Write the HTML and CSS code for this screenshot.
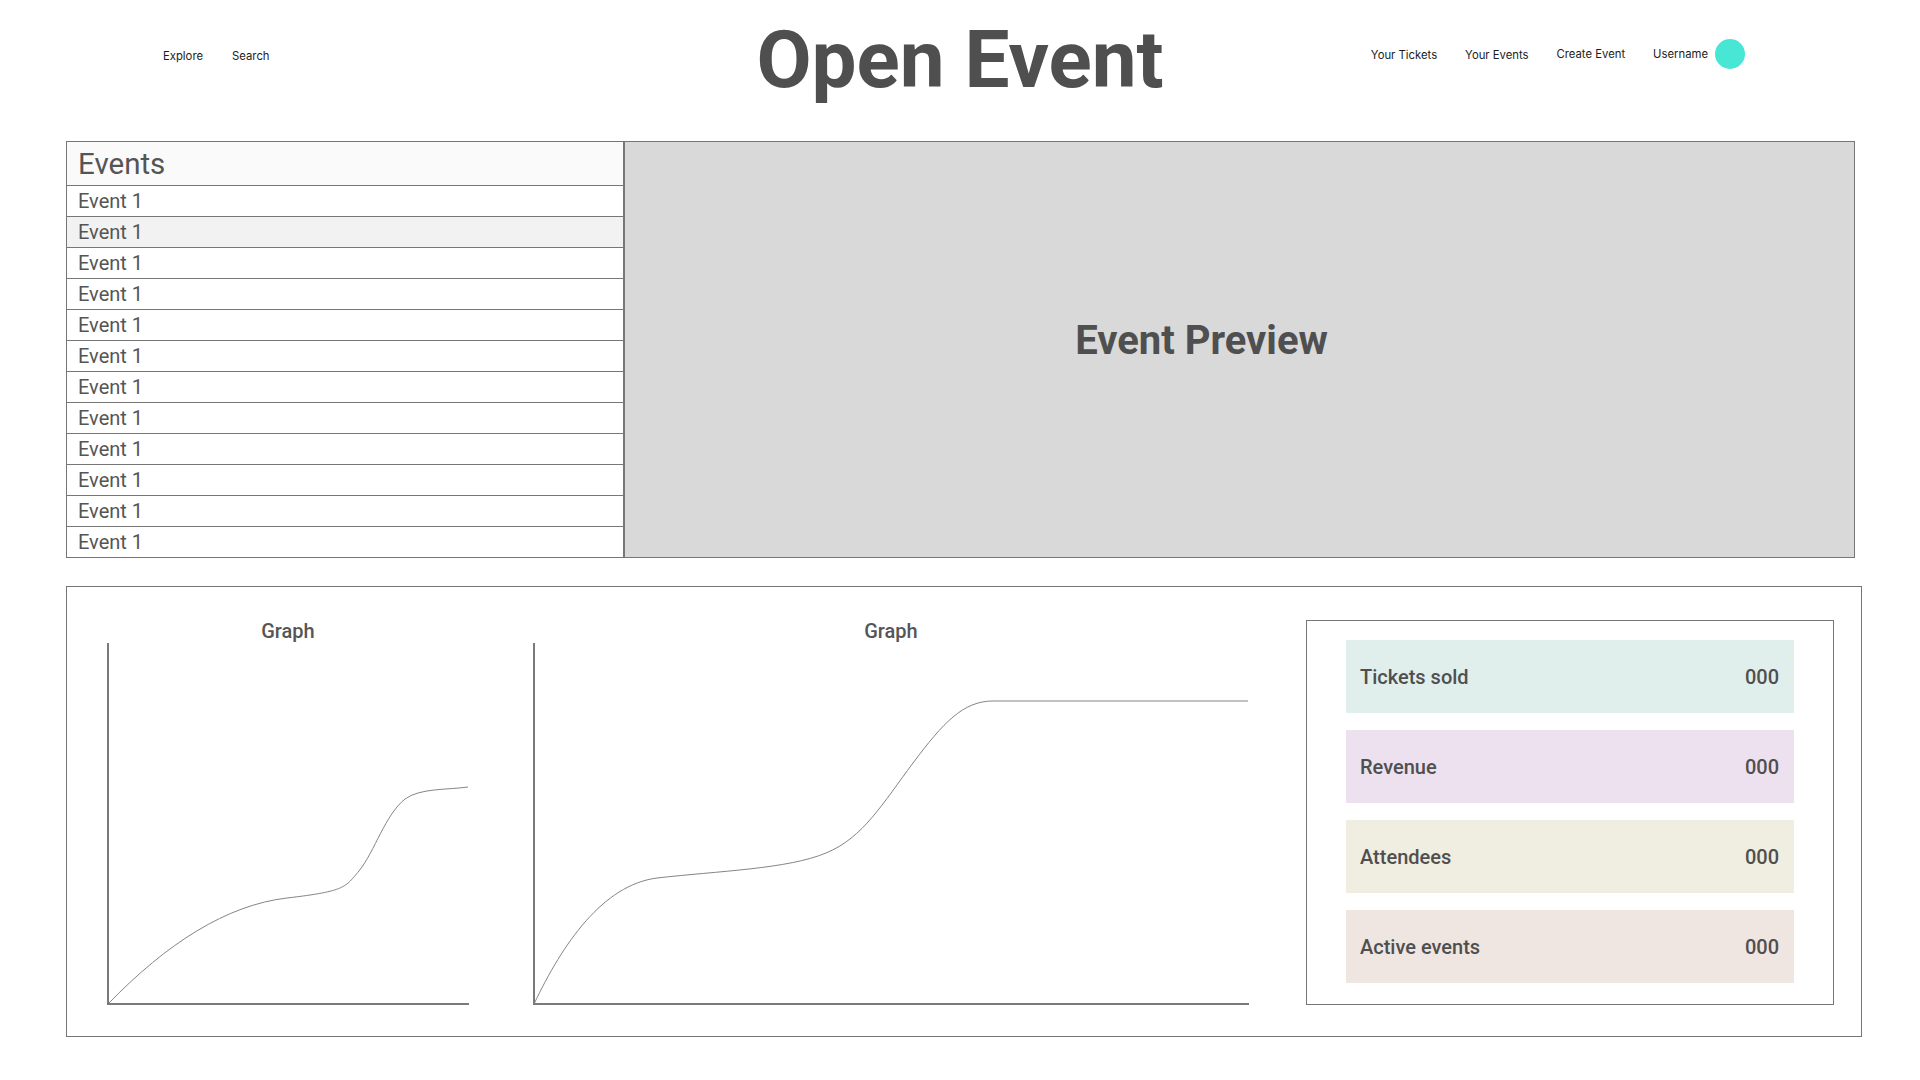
FILE: index.html
```html
<!DOCTYPE html>
<html lang="en">
<head>
<meta charset="utf-8">
<title>Open Event</title>
<link rel="stylesheet" href="styles.css">
</head>
<body>
<header class="topbar">
  <nav class="nav nav-left">
    <a class="nav-link" href="#">Explore</a>
    <a class="nav-link" href="#">Search</a>
  </nav>
  <h1 class="brand">Open Event</h1>
  <nav class="nav nav-right">
    <a class="nav-link" href="#">Your Tickets</a>
    <a class="nav-link" href="#">Your Events</a>
    <a class="nav-link nav-link-up" href="#">Create Event</a>
    <span class="user">
      <span class="nav-link nav-link-up">Username</span>
      <span class="avatar"></span>
    </span>
  </nav>
</header>

<main class="content">
  <section class="overview">
    <div class="event-list">
      <div class="list-head">Events</div>
      <div class="list-row">Event 1</div>
      <div class="list-row is-active">Event 1</div>
      <div class="list-row">Event 1</div>
      <div class="list-row">Event 1</div>
      <div class="list-row">Event 1</div>
      <div class="list-row">Event 1</div>
      <div class="list-row">Event 1</div>
      <div class="list-row">Event 1</div>
      <div class="list-row">Event 1</div>
      <div class="list-row">Event 1</div>
      <div class="list-row">Event 1</div>
      <div class="list-row">Event 1</div>
    </div>
    <div class="preview">
      <h2 class="preview-title">Event Preview</h2>
    </div>
  </section>

  <section class="stats-panel">
    <div class="graph graph-small">
      <div class="graph-title">Graph</div>
      <svg class="graph-svg" width="362" height="362" viewBox="0 0 362 362">
        <path class="curve" d="M1,361 C60,300 120,262 180,255 S238,244 252,228 C268,208 278,172 298,156 C313,145 340,147 361,144"/>
        <line class="axis" x1="1" y1="0" x2="1" y2="362"/>
        <line class="axis" x1="0" y1="361" x2="362" y2="361"/>
      </svg>
    </div>
    <div class="graph graph-large">
      <div class="graph-title">Graph</div>
      <svg class="graph-svg" width="716" height="362" viewBox="0 0 716 362">
        <path class="curve" d="M1,361 C30,300 70,242 124,235 C185,228 255,226 293,210 C330,195 350,160 380,120 C410,80 430,58 460,58 L715,58"/>
        <line class="axis" x1="1" y1="0" x2="1" y2="362"/>
        <line class="axis" x1="0" y1="361" x2="716" y2="361"/>
      </svg>
    </div>
    <div class="stats-box">
      <div class="stat stat-tickets"><span>Tickets sold</span><span>000</span></div>
      <div class="stat stat-revenue"><span>Revenue</span><span>000</span></div>
      <div class="stat stat-attendees"><span>Attendees</span><span>000</span></div>
      <div class="stat stat-active"><span>Active events</span><span>000</span></div>
    </div>
  </section>
</main>
</body>
</html>
```

FILE: styles.css
```css
* { box-sizing: border-box; }

body {
  margin: 0;
  background: #ffffff;
  font-family: Roboto, "Liberation Sans", sans-serif;
  color: #555555;
}

/* ---------- header ---------- */
.topbar {
  display: grid;
  grid-template-columns: 1fr auto 1fr;
  align-items: start;
  height: 141px;
}

.nav {
  display: flex;
  gap: 29px;
}

.nav-left {
  padding-left: 163px;
  margin-top: 48px;
}

.nav-right {
  justify-content: flex-end;
  align-items: center;
  gap: 28px;
  height: 30px;
  margin-top: 39px;
  padding-right: 175px;
}

.nav-link {
  font-family: Inter, "Liberation Sans", sans-serif;
  font-size: 11.3px;
  line-height: 14px;
  color: #1c1c1c;
  text-decoration: none;
  position: relative;
  top: 1px;
}

.nav-link-up {
  top: 0;
}

.user {
  display: flex;
  align-items: center;
  gap: 7px;
}

.avatar {
  width: 30px;
  height: 30px;
  border-radius: 50%;
  background: #47e6d5;
}

.brand {
  margin: 20px 0 0;
  font-family: Roboto, "Liberation Sans", sans-serif;
  font-weight: 700;
  font-size: 80px;
  line-height: 80px;
  color: #4f4f4f;
}

/* ---------- overview ---------- */
.overview {
  display: flex;
  height: 417px;
  margin: 0 65px 0 66px;
}

.event-list {
  width: 558px;
  flex: none;
  border: 1px solid #767676;
  display: flex;
  flex-direction: column;
}

.list-head {
  height: 44px;
  padding: 1px 0 0 11px;
  border-bottom: 1px solid #767676;
  background: #fafafa;
  font-size: 29.5px;
  line-height: 42px;
  color: #555555;
}

.list-row {
  height: 31px;
  padding-left: 11px;
  border-bottom: 1px solid #767676;
  font-size: 20px;
  line-height: 30px;
  color: #555555;
  background: #ffffff;
}

.list-row:last-child {
  height: 30px;
  border-bottom: none;
}

.list-row.is-active {
  background: #f2f2f2;
}

.preview {
  flex: 1;
  border: 1px solid #767676;
  background: #d9d9d9;
  display: flex;
  align-items: center;
  justify-content: center;
  padding: 0 76px 18px 0;
}

.preview-title {
  margin: 0;
  font-weight: 700;
  font-size: 40px;
  line-height: 46px;
  color: #4f4f4f;
}

/* ---------- stats panel ---------- */
.stats-panel {
  display: flex;
  align-items: flex-start;
  margin: 28px 58px 0 66px;
  padding: 32px 27px 31px 40px;
  border: 1px solid #767676;
}

.graph {
  display: flex;
  flex-direction: column;
  flex: none;
}

.graph-small { width: 362px; }

.graph-large {
  width: 716px;
  margin-left: 64px;
}

.graph-title {
  height: 24px;
  text-align: center;
  font-weight: 500;
  font-size: 20px;
  line-height: 24px;
  color: #555555;
}

.graph-svg {
  display: block;
}

.axis {
  stroke: #7a7a7a;
  stroke-width: 2;
}

.curve {
  fill: none;
  stroke: #858585;
  stroke-width: 1;
}

.stats-box {
  width: 528px;
  flex: none;
  margin: 1px 0 0 57px;
  padding: 19px 39px 21px;
  border: 1px solid #767676;
  display: flex;
  flex-direction: column;
  gap: 17px;
}

.stat {
  height: 73px;
  display: flex;
  align-items: center;
  justify-content: space-between;
  padding: 0 15px 0 14px;
  font-weight: 500;
  font-size: 20px;
  color: #4f4f4f;
}

.stat-tickets { background: #e0efec; }
.stat-revenue { background: #ede1f0; }
.stat-attendees { background: #f0ede1; }
.stat-active { background: #efe5e1; }
```
